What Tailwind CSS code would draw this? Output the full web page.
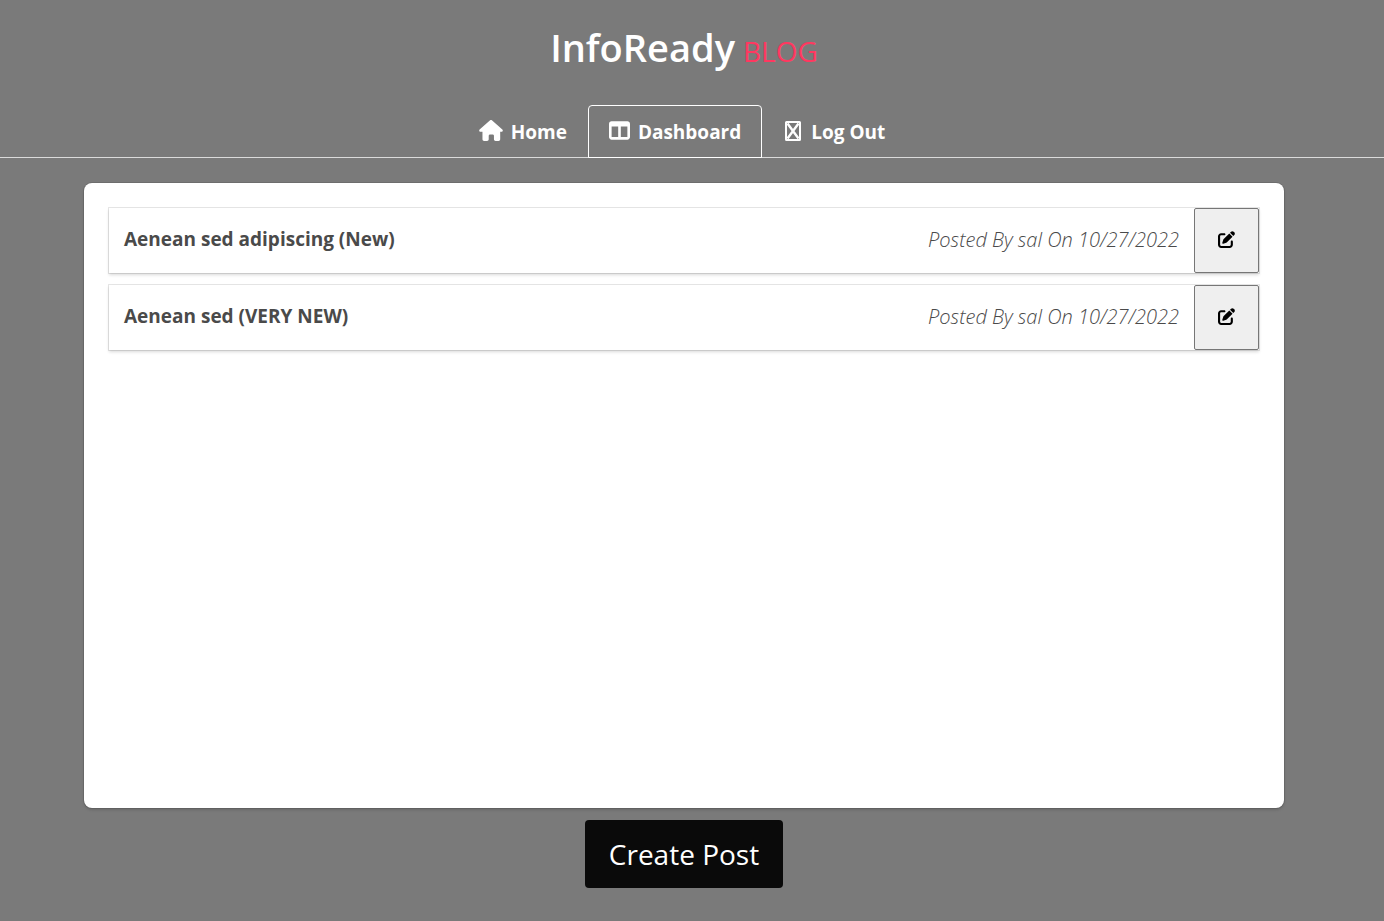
<!DOCTYPE html>
<html lang="en">
<head>
<meta charset="utf-8">
<meta name="viewport" content="width=device-width, initial-scale=1">
<title>InfoReady Blog</title>
<script src="https://cdn.jsdelivr.net/npm/@tailwindcss/browser@4"></script>
</head>
<body class="flex min-h-screen flex-col bg-[#7a7a7a] font-['Open_Sans',sans-serif] text-[#4a4a4a]">
<header>
  <h1 class="flex items-baseline justify-center gap-2 pt-6 pr-4 text-[38px] leading-[46px] font-semibold text-white">InfoReady <span class="text-[28px] leading-none font-normal text-[#ff3860]">BLOG</span></h1>
  <nav class="mt-[35px] flex justify-center border-b border-[#dbdbdb] pr-4 text-[19px] font-bold text-white">
    <a href="#" class="-mb-px flex h-[53px] items-center gap-2 border border-transparent px-5 pt-0.5">
      <svg class="mb-1 h-[21px] w-6" viewBox="0 0 576 512" fill="currentColor" aria-hidden="true"><path d="M575.800 255.500c0 18-15 32.100-32 32.100h-32l.7 160.200c0 2.700-.2 5.400-.5 8.100V472c0 22.100-17.900 40-40 40h-72c-22.100 0-40-17.900-40-40v-88c0-17.700-14.300-32-32-32h-64c-17.700 0-32 14.300-32 32v88c0 22.100-17.900 40-40 40h-72c-22.100 0-40-17.900-40-40V287.600H32c-18 0-32-14-32-32.100 0-9 3-17 10-24L266.400 8c7-7 15-8 22-8s15 2 21 7l255.400 224.500c8 7 12 15 11 24z"/></svg>
      Home
    </a>
    <a href="#" aria-current="page" class="-mb-px flex h-[53px] items-center gap-2 rounded-t border border-white px-5 pt-0.5">
      <svg class="mb-1 h-[21px] w-[21px]" viewBox="0 0 512 512" fill="currentColor" aria-hidden="true"><path fill-rule="evenodd" d="M0 96c0-35.300 28.700-64 64-64h384c35.300 0 64 28.700 64 64v320c0 35.300-28.700 64-64 64H64c-35.300 0-64-28.700-64-64V96zm64 64v256h160V160H64zm384 0H288v256h160V160z"/></svg>
      Dashboard
    </a>
    <a href="#" class="-mb-px flex h-[53px] items-center gap-2 border border-transparent pt-0.5 pr-6 pl-5">
      <svg class="mb-1 h-5 w-5" viewBox="0 0 20 20" fill="none" stroke="currentColor" stroke-width="2" aria-hidden="true"><rect x="3" y="1" width="14" height="18" rx=".5"/><path d="M4.500 2.500l11 15M15.500 2.500l-11 15" stroke-width="2.400"/></svg>
      Log Out
    </a>
  </nav>
</header>
<main class="flex flex-1 flex-col items-center pt-[25px] pr-4 pb-[33px]">
  <section class="flex w-full max-w-[1200px] flex-1 flex-col gap-3 rounded-lg bg-white px-[25px] py-[25px] shadow-[0_2px_3px_rgba(10,10,10,0.15),0_0_0_1px_rgba(10,10,10,0.1)]">
    <article class="flex h-[65px] bg-white shadow-[0_2px_3px_rgba(10,10,10,0.15),0_0_0_1px_rgba(10,10,10,0.1)]">
      <div class="flex flex-1 items-center justify-between px-[15px] pb-0.5">
        <h2 class="text-[19px] font-bold">Aenean sed adipiscing (New)</h2>
        <p class="text-xl font-light italic">Posted By sal On 10/27/2022</p>
      </div>
      <button type="button" aria-label="Edit Aenean sed adipiscing (New)" class="flex w-[65px] items-center justify-center rounded-xs border border-[#767676] bg-[#efefef] text-black">
        <svg class="mb-0.5 h-[17px] w-[17px]" viewBox="0 0 512 512" fill="currentColor" aria-hidden="true"><path d="M471.600 21.700c-21.900-21.900-57.300-21.900-79.200 0L362.300 51.700l97.900 97.900 30.100-30.100c21.900-21.900 21.900-57.300 0-79.200L471.600 21.700zM172.400 241.700c-6.100 6.100-10.800 13.600-13.500 21.900l-29.600 88.800c-2.900 8.600-.6 18.100 5.800 24.600s15.900 8.700 24.600 5.800l88.800-29.600c8.200-2.700 15.700-7.400 21.900-13.500L437.700 172.300 339.700 74.300 172.400 241.700zM96 64C43 64 0 107 0 160v256c0 53 43 96 96 96h256c53 0 96-43 96-96v-96c0-17.700-14.300-32-32-32s-32 14.300-32 32v96c0 17.700-14.300 32-32 32H96c-17.700 0-32-14.300-32-32V160c0-17.700 14.300-32 32-32h96c17.700 0 32-14.300 32-32s-14.300-32-32-32H96z"/></svg>
      </button>
    </article>
    <article class="flex h-[65px] bg-white shadow-[0_2px_3px_rgba(10,10,10,0.15),0_0_0_1px_rgba(10,10,10,0.1)]">
      <div class="flex flex-1 items-center justify-between px-[15px] pb-0.5">
        <h2 class="text-[19px] font-bold">Aenean sed (VERY NEW)</h2>
        <p class="text-xl font-light italic">Posted By sal On 10/27/2022</p>
      </div>
      <button type="button" aria-label="Edit Aenean sed (VERY NEW)" class="flex w-[65px] items-center justify-center rounded-xs border border-[#767676] bg-[#efefef] text-black">
        <svg class="mb-0.5 h-[17px] w-[17px]" viewBox="0 0 512 512" fill="currentColor" aria-hidden="true"><path d="M471.600 21.700c-21.900-21.900-57.300-21.900-79.200 0L362.300 51.700l97.900 97.900 30.100-30.100c21.900-21.900 21.900-57.300 0-79.200L471.600 21.700zM172.400 241.700c-6.100 6.100-10.800 13.600-13.500 21.900l-29.600 88.800c-2.900 8.600-.6 18.100 5.800 24.600s15.900 8.700 24.600 5.800l88.800-29.600c8.200-2.700 15.700-7.400 21.900-13.500L437.700 172.300 339.700 74.300 172.400 241.700zM96 64C43 64 0 107 0 160v256c0 53 43 96 96 96h256c53 0 96-43 96-96v-96c0-17.700-14.300-32-32-32s-32 14.300-32 32v96c0 17.700-14.300 32-32 32H96c-17.700 0-32-14.300-32-32V160c0-17.700 14.300-32 32-32h96c17.700 0 32-14.300 32-32s-14.300-32-32-32H96z"/></svg>
      </button>
    </article>
  </section>
  <button type="button" class="mt-3 flex h-[68px] items-center rounded bg-[#0a0a0a] px-6 text-[28px] text-white">Create Post</button>
</main>
</body>
</html>
